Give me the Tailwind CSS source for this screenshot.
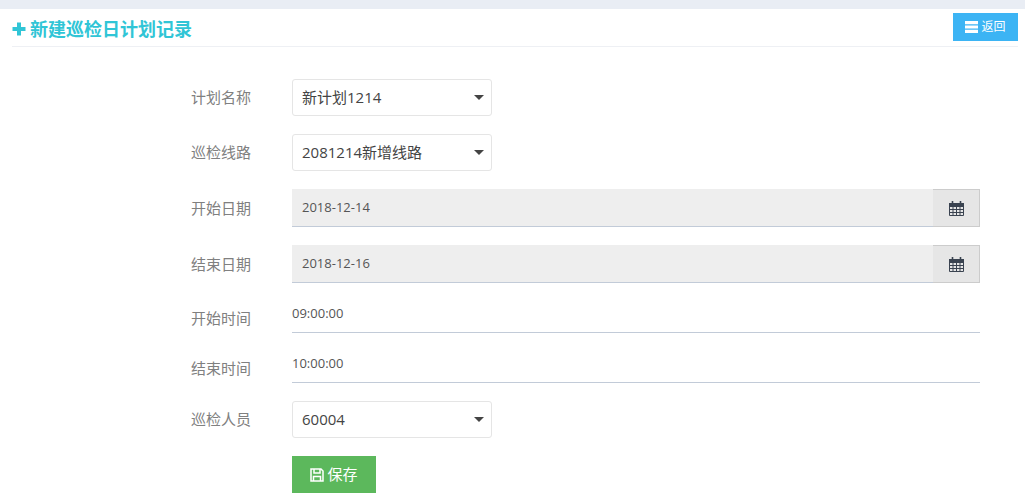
<!DOCTYPE html>
<html lang="zh-CN">
  <head>
    <meta charset="UTF-8" />
    <title>新建巡检日计划记录</title>
    <script src="https://cdn.jsdelivr.net/npm/@tailwindcss/browser@4"></script>
  </head>
  <body class="h-[503px] overflow-hidden bg-white font-['Open_Sans','Noto_Sans_CJK_SC',sans-serif] text-[#555]">
    <div class="h-[9px] bg-[#e9edf4]"></div>

    <!-- header -->
    <div class="mx-[12px] mr-[7px] flex h-[38px] items-start justify-between border-b border-[#eef0f4]">
      <h1 class="flex h-[37px] items-center gap-[4px] pt-[3px] text-[18px] font-bold text-[#30c5d6]">
        <svg class="h-[14px] w-[14px]" viewBox="0 0 14 14" fill="#30c5d6"><path d="M5 .5h4V5h4.500v4H9v4.500H5V9H.500V5H5z" /></svg>
        <span>新建巡检日计划记录</span>
      </h1>
      <button class="mt-[4px] flex h-[28px] w-[65px] items-center justify-center gap-[3px] bg-[#3cb4f4] text-[12px] text-white">
        <svg class="h-[12px] w-[13px]" viewBox="0 0 13 12" fill="#fff"><path d="M0 0h13v3.200H0zM0 4.400h13v3.200H0zM0 8.800h13V12H0z" /></svg>
        <span>返回</span>
      </button>
    </div>

    <form class="mt-[32px] flex flex-col pl-[191px] pr-[45px]">
      <div class="flex h-[37px] items-center">
        <label class="w-[101px] text-[15px] text-[#808080]">计划名称</label>
        <div class="flex h-[37px] w-[200px] items-center justify-between rounded-[3px] border border-[#e5e5e5] pl-[9px] pr-[7px] text-[15px] text-[#444]">
          <span>新计划1214</span>
          <span class="h-0 w-0 border-x-[5px] border-t-[5px] border-x-transparent border-t-[#444]"></span>
        </div>
      </div>

      <div class="mt-[18px] flex h-[37px] items-center">
        <label class="w-[101px] text-[15px] text-[#808080]">巡检线路</label>
        <div class="flex h-[37px] w-[200px] items-center justify-between rounded-[3px] border border-[#e5e5e5] pl-[9px] pr-[7px] text-[15px] text-[#444]">
          <span>2081214新增线路</span>
          <span class="h-0 w-0 border-x-[5px] border-t-[5px] border-x-transparent border-t-[#444]"></span>
        </div>
      </div>

      <div class="mt-[18px] flex h-[38px] items-center">
        <label class="w-[101px] text-[15px] text-[#808080]">开始日期</label>
        <div class="flex h-[38px] flex-1">
          <div class="flex flex-1 items-center border-b border-[#c2cbd8] bg-[#eeeeee] pl-[10px] text-[13px] text-[#555]">2018-12-14</div>
          <div class="flex w-[47px] items-center justify-center border-r border-b border-t border-[#ccc] bg-[#e6e6e6]">
            <svg class="h-[16px] w-[15px]" viewBox="0 0 15 16" fill="none" stroke="#3a4350"><path d="M.5 3.500h14v12H.5zM.5 6.500h14M.5 9.500h14M.5 12.500h14M4 6.500v9M7.500 6.500v9M11 6.500v9" /><path d="M3.500 1v3.500M11.500 1v3.500" stroke-width="1.600" /><path d="M0 3h15v3H0z" fill="#3a4350" stroke="none" /></svg>
          </div>
        </div>
      </div>

      <div class="mt-[18px] flex h-[38px] items-center">
        <label class="w-[101px] text-[15px] text-[#808080]">结束日期</label>
        <div class="flex h-[38px] flex-1">
          <div class="flex flex-1 items-center border-b border-[#c2cbd8] bg-[#eeeeee] pl-[10px] text-[13px] text-[#555]">2018-12-16</div>
          <div class="flex w-[47px] items-center justify-center border-r border-b border-t border-[#ccc] bg-[#e6e6e6]">
            <svg class="h-[16px] w-[15px]" viewBox="0 0 15 16" fill="none" stroke="#3a4350"><path d="M.5 3.500h14v12H.5zM.5 6.500h14M.5 9.500h14M.5 12.500h14M4 6.500v9M7.500 6.500v9M11 6.500v9" /><path d="M3.500 1v3.500M11.500 1v3.500" stroke-width="1.600" /><path d="M0 3h15v3H0z" fill="#3a4350" stroke="none" /></svg>
          </div>
        </div>
      </div>

      <div class="mt-[18px] flex h-[32px]">
        <label class="mt-[6px] w-[101px] text-[15px] text-[#808080]">开始时间</label>
        <div class="flex flex-1 items-start border-b border-[#c2cbd8] pt-[3px] text-[13px] text-[#555]">09:00:00</div>
      </div>

      <div class="mt-[18px] flex h-[32px]">
        <label class="mt-[6px] w-[101px] text-[15px] text-[#808080]">结束时间</label>
        <div class="flex flex-1 items-start border-b border-[#c2cbd8] pt-[3px] text-[13px] text-[#555]">10:00:00</div>
      </div>

      <div class="mt-[18px] flex h-[37px] items-center">
        <label class="w-[101px] text-[15px] text-[#808080]">巡检人员</label>
        <div class="flex h-[37px] w-[200px] items-center justify-between rounded-[3px] border border-[#e5e5e5] pl-[9px] pr-[7px] text-[15px] text-[#444]">
          <span>60004</span>
          <span class="h-0 w-0 border-x-[5px] border-t-[5px] border-x-transparent border-t-[#444]"></span>
        </div>
      </div>

      <div class="mt-[18px] pl-[101px]">
        <button type="button" class="flex h-[37px] w-[84px] items-center justify-center gap-[3px] bg-[#5cb85c] text-[15px] text-white">
          <svg class="h-[14px] w-[14px]" viewBox="0 0 14 14" fill="none" stroke="#fff" stroke-width="1.500"><path d="M1 1h10l2 2v10H1z" /><path d="M4 1v4h6V1M3.500 13V8.500h7V13" /></svg>
          <span>保存</span>
        </button>
      </div>
    </form>
  </body>
</html>
